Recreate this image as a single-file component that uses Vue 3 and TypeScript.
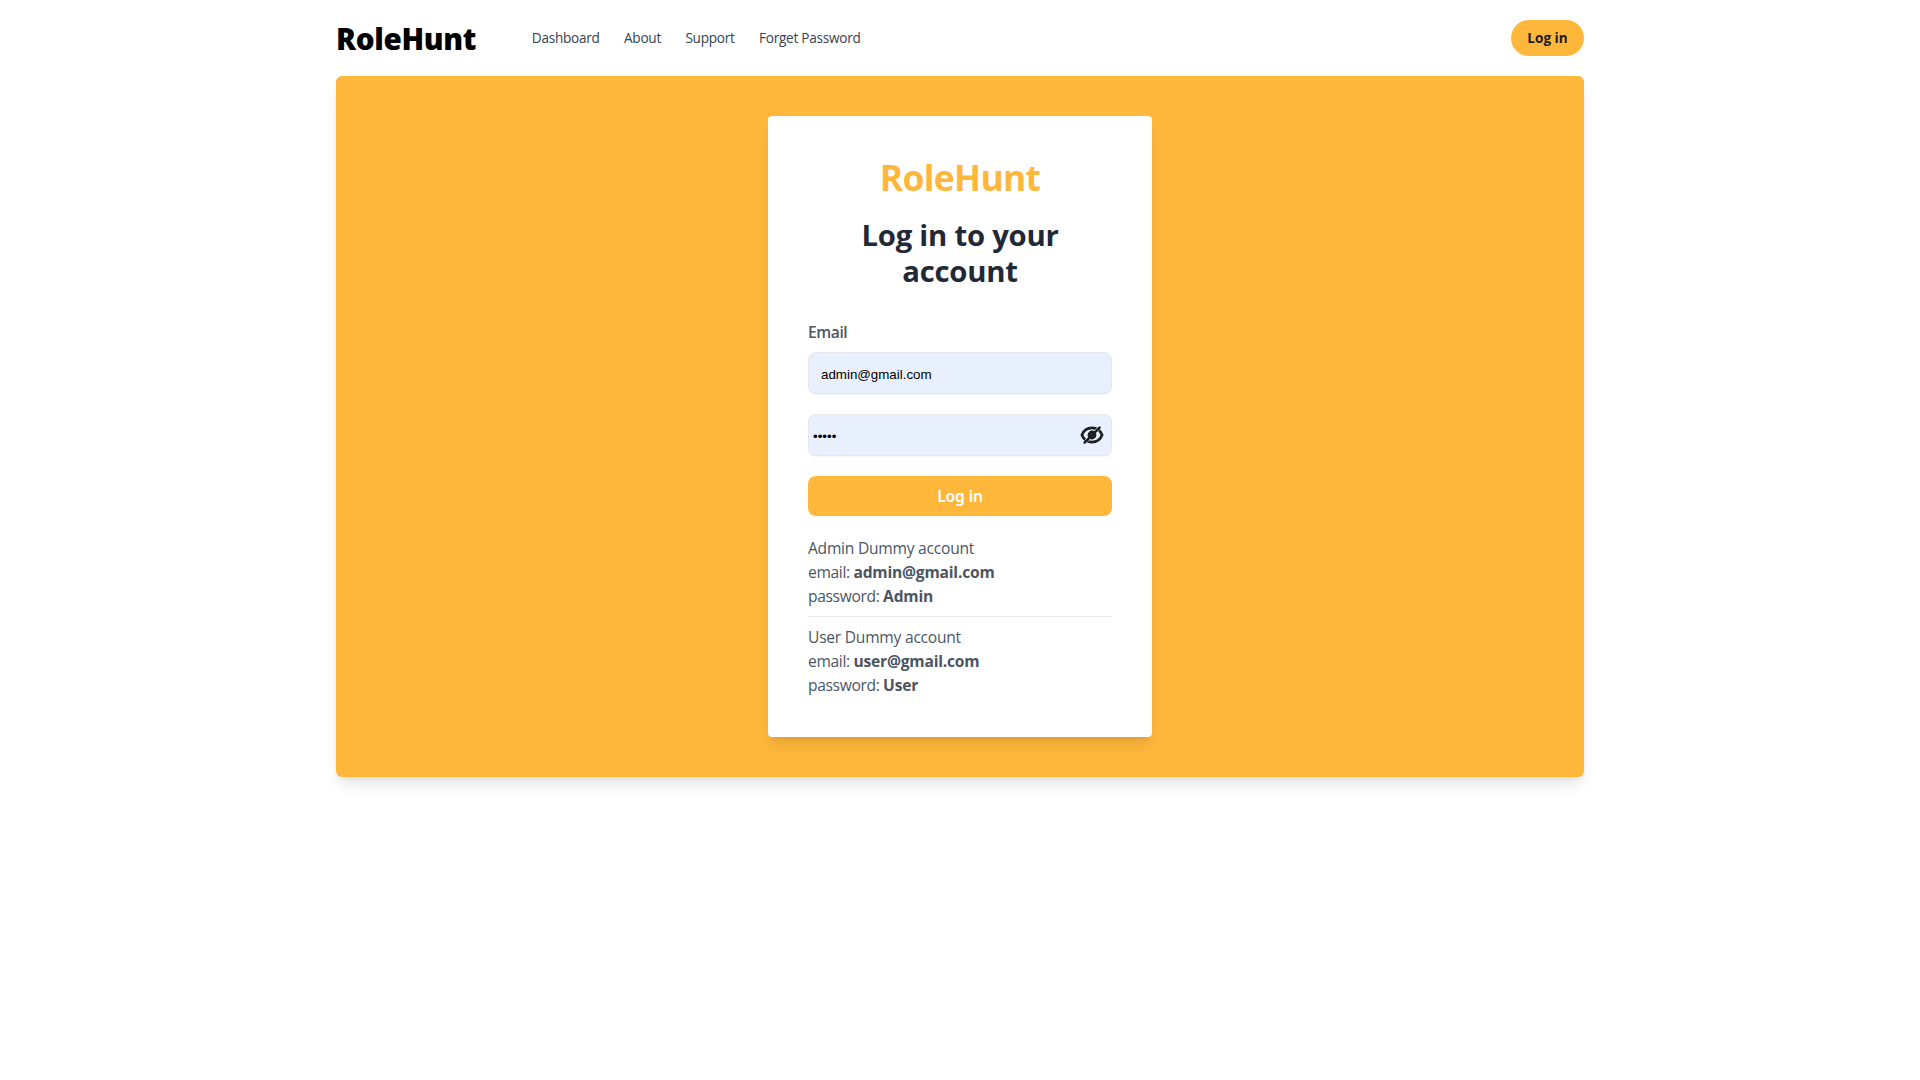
<script setup lang="ts">
import { ref } from 'vue'

interface Account {
  title: string
  email: string
  password: string
}

const links: string[] = ['Dashboard', 'About', 'Support', 'Forget Password']
const accounts: Account[] = [
  { title: 'Admin Dummy account', email: 'admin@gmail.com', password: 'Admin' },
  { title: 'User Dummy account', email: 'user@gmail.com', password: 'User' },
]

const email = ref('admin@gmail.com')
const password = ref('Admin')
const visible = ref(false)
</script>

<template>
  <div class="container">
    <header class="header">
      <a class="logo">RoleHunt</a>
      <nav class="nav">
        <a v-for="link in links" :key="link">{{ link }}</a>
      </nav>
      <button class="header-login" type="button">Log in</button>
    </header>

    <main class="panel">
      <section class="card">
        <h1 class="brand">RoleHunt</h1>
        <h2 class="title">Log in to your account</h2>

        <form class="form" @submit.prevent>
          <div class="group">
            <label class="label" for="email">Email</label>
            <div class="field email">
              <input id="email" v-model="email" type="text" spellcheck="false" />
            </div>
          </div>
          <div class="field password">
            <input v-model="password" :type="visible ? 'text' : 'password'" />
            <svg class="eye" viewBox="0 0 24 24" @click="visible = !visible">
              <path class="lid" d="M1.9 12C3.8 7.2 7.4 4.9 12 4.9S20.2 7.2 22.1 12C20.2 16.8 16.6 19.1 12 19.1S3.8 16.8 1.9 12Z" />
              <path class="gap" d="M13.2 8.9L17.2 4.9M15.3 11L19.5 6.8M4.5 17.5L8.5 13.5M6.6 19.8L10.8 15.6" />
              <circle class="pupil" cx="12" cy="12" r="3.6" />
              <path class="slash" d="M4.6 19.6L19.6 4.6" />
              <path class="glint" d="M10.6 11.6L11.8 10.4M12.3 13.4L13.4 12.3" />
            </svg>
          </div>
          <button class="submit" type="submit">Log in</button>
        </form>

        <div class="accounts">
          <div v-for="account in accounts" :key="account.email" class="account">
            <p>{{ account.title }}</p>
            <p><span class="key">email: </span><b>{{ account.email }}</b></p>
            <p><span class="key">password: </span><b>{{ account.password }}</b></p>
          </div>
        </div>
      </section>
    </main>
  </div>
</template>

<style>
body {
  background: #fff;
}
</style>

<style scoped>
* {
  box-sizing: border-box;
  margin: 0;
}

.container {
  width: 1248px;
  min-height: 100vh;
  margin: 0 auto;
  font-family: "Open Sans", "Noto Sans", sans-serif;
  color: #4b5563;
}

.header {
  display: flex;
  align-items: center;
  height: 76px;
}

.logo {
  width: 195.8px;
  padding-top: 2px;
  font-size: 29.6px;
  line-height: 40px;
  font-weight: 900;
  letter-spacing: -0.33px;
  color: #000;
}

.nav {
  display: flex;
  gap: 24.4px;
  flex: 1;
  font-size: 13.6px;
  line-height: 20px;
  letter-spacing: -0.26px;
  color: #374151;
}

.header-login {
  height: 36px;
  width: 73px;
  padding: 0;
  border: 0;
  border-radius: 18px;
  background: #ffb73b;
  color: #1c1c1c;
  font: 700 13.6px/20px "Open Sans", "Noto Sans", sans-serif;
}

.panel {
  display: flex;
  justify-content: center;
  padding: 40px 0;
  border-radius: 6px;
  background: #ffb73b;
  box-shadow: 0 10px 15px -3px rgba(0, 0, 0, 0.1), 0 4px 6px -4px rgba(0, 0, 0, 0.1);
}

.card {
  width: 384px;
  padding: 40px;
  border-radius: 4px;
  background: #fff;
  box-shadow: 0 10px 15px -3px rgba(0, 0, 0, 0.1), 0 4px 6px -4px rgba(0, 0, 0, 0.1);
}

.brand {
  padding-top: 1px;
  margin-bottom: 20px;
  font-size: 35.4px;
  line-height: 40px;
  font-weight: 700;
  letter-spacing: -0.7px;
  text-align: center;
  color: #ffb73b;
}

.title {
  margin-bottom: 31px;
  padding: 0 30px;
  font-size: 29.3px;
  line-height: 36px;
  font-weight: 700;
  letter-spacing: -0.24px;
  text-align: center;
  color: #1f2937;
}

.form {
  display: flex;
  flex-direction: column;
  gap: 20px;
}

.label {
  display: block;
  margin-bottom: 8px;
  font-size: 15.6px;
  line-height: 24px;
  font-weight: 600;
  letter-spacing: -0.4px;
}

.field {
  display: flex;
  align-items: center;
  height: 42px;
  border: 1px solid #e5e7eb;
  border-radius: 8px;
  background: #e8f0fe;
  box-shadow: 0 1px 2px rgba(0, 0, 0, 0.05);
}

.field input {
  flex: 1;
  min-width: 0;
  height: 40px;
  padding: 2px 0 0;
  border: 0;
  outline: 0;
  background: transparent;
  color: #000;
  font: 13.333px "Liberation Sans", Arial, sans-serif;
}

.email {
  padding: 0 12px;
}

.password {
  padding: 0 7px 0 4px;
}

.eye {
  width: 24px;
  height: 24px;
  overflow: visible;
  fill: none;
  stroke: #1c1e21;
}

.lid {
  stroke-width: 2.7;
}

.pupil {
  fill: #1c1e21;
  stroke-width: 1.6;
}

.gap {
  stroke: #e8f0fe;
  stroke-width: 0.8;
}

.slash {
  stroke-width: 2.5;
  stroke-linecap: round;
}

.glint {
  stroke: #4b5056;
  stroke-width: 0.6;
}

.submit {
  height: 40px;
  padding: 0;
  border: 0;
  border-radius: 8px;
  background: #ffb73b;
  color: #fff;
  font: 600 15.6px/24px "Noto Sans", "Open Sans", sans-serif;
  letter-spacing: -0.1px;
}

.accounts {
  margin-top: 20px;
  font-size: 15.6px;
  line-height: 24px;
  letter-spacing: -0.24px;
}

.accounts b {
  letter-spacing: -0.2px;
}

.account + .account {
  margin-top: 8px;
  padding-top: 8px;
  border-top: 1px solid #e5e7eb;
}

.key {
  letter-spacing: -0.35px;
}
</style>
